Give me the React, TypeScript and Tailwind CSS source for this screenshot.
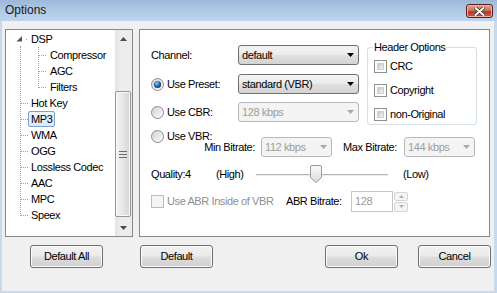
import React from "react";

type TreeItem = { label: string; depth: 0 | 1; first?: boolean; last?: boolean; selected?: boolean };

const treeItems: TreeItem[] = [
  { label: "DSP", depth: 0, first: true },
  { label: "Compressor", depth: 1 },
  { label: "AGC", depth: 1 },
  { label: "Filters", depth: 1, last: true },
  { label: "Hot Key", depth: 0 },
  { label: "MP3", depth: 0, selected: true },
  { label: "WMA", depth: 0 },
  { label: "OGG", depth: 0 },
  { label: "Lossless Codec", depth: 0 },
  { label: "AAC", depth: 0 },
  { label: "MPC", depth: 0 },
  { label: "Speex", depth: 0, last: true },
];

const dot = { stroke: "#a0a0a0", strokeDasharray: "1 1", shapeRendering: "crispEdges" as const };

// dotted tree connectors for one row
function Connector({ item }: { item: TreeItem }) {
  if (item.depth === 1) {
    return (
      <svg width="41" height="16" className="shrink-0">
        <line x1="14.5" y1="0" x2="14.5" y2="16" {...dot} />
        <line x1="32.5" y1="0" x2="32.5" y2={item.last ? 9 : 16} {...dot} />
        <line x1="33" y1="8.5" x2="41" y2="8.5" {...dot} />
      </svg>
    );
  }
  if (item.first) {
    return (
      <svg width="22" height="16" className="shrink-0">
        <polygon points="16,5 16,10.5 10.5,10.5" fill="#555" />
        <rect x="20" y="8" width="1" height="1" fill="#a0a0a0" />
        <line x1="14.5" y1="15" x2="14.5" y2="16" {...dot} />
      </svg>
    );
  }
  return (
    <svg width="22" height="16" className="shrink-0">
      <line x1="14.5" y1="0" x2="14.5" y2={item.last ? 9 : 16} {...dot} />
      <line x1="15" y1="8.5" x2="22" y2="8.5" {...dot} />
    </svg>
  );
}

function Radio({ checked }: { checked?: boolean }) {
  return (
    <svg width="13" height="13" viewBox="0 0 13 13" className="shrink-0">
      <defs>
        <linearGradient id="radioFill" x1="0" y1="0" x2="1" y2="1">
          <stop offset="0" stopColor="#d2d2d2" />
          <stop offset="1" stopColor="#fbfbfb" />
        </linearGradient>
        <radialGradient id="radioDot" cx="0.4" cy="0.35" r="0.75">
          <stop offset="0" stopColor="#a8cdf5" />
          <stop offset="0.45" stopColor="#2d6cc0" />
          <stop offset="1" stopColor="#0b2a55" />
        </radialGradient>
      </defs>
      <circle cx="6.5" cy="6.5" r="6" fill="url(#radioFill)" stroke="#8d8d8d" />
      {checked && <circle cx="6.5" cy="6.5" r="3.6" fill="url(#radioDot)" />}
    </svg>
  );
}

function Check({ disabled }: { disabled?: boolean }) {
  return (
    <div
      className={
        disabled
          ? "w-[13px] h-[13px] shrink-0 border border-[#bcbcbc] bg-[#f4f4f4]"
          : "w-[13px] h-[13px] shrink-0 border border-[#8e8f8f] bg-white p-[2px]"
      }
    >
      {!disabled && <div className="w-full h-full bg-[linear-gradient(135deg,#c9c9c9,#f4f4f4)] border border-[#cfcfcf]" />}
    </div>
  );
}

function Combo({ text, w, disabled }: { text: string; w: string; disabled?: boolean }) {
  return (
    <div
      className={
        (disabled
          ? "border-[#b6babe] bg-[#f4f4f4] text-[#9d9d9d] "
          : "border-[#707070] bg-[linear-gradient(#f3f3f3,#ececec_48%,#e0e0e0_52%,#d3d3d3)] text-black ") +
        w +
        " h-[20px] shrink-0 flex items-center justify-between border rounded-[3px] pl-[3px] pr-[4px]"
      }
    >
      <span>{text}</span>
      <svg width="7" height="4">
        <polygon points="0,0 7,0 3.5,4" fill={disabled ? "#a8a8a8" : "#000"} />
      </svg>
    </div>
  );
}

function Button({ label, className = "" }: { label: string; className?: string }) {
  return (
    <button
      className={
        "w-[73px] h-[23px] shrink-0 border border-[#707070] rounded-[3px] bg-[linear-gradient(#f2f2f2,#ebebeb_45%,#dddddd_55%,#cfcfcf)] shadow-[inset_0_0_0_1px_#fbfbfb] text-black " +
        className
      }
    >
      {label}
    </button>
  );
}

function ScrollArrow({ up }: { up?: boolean }) {
  return (
    <div className="h-[17px] flex items-center justify-center shrink-0">
      <svg width="7" height="4">
        <polygon points={up ? "3.5,0 7,4 0,4" : "0,0 7,0 3.5,4"} fill="#4a4a4a" />
      </svg>
    </div>
  );
}

function Tree() {
  return (
    <div className="w-[128px] h-[208px] shrink-0 border border-[#828790] bg-white flex">
      <div className="flex-1 pt-[1px] flex flex-col">
        {treeItems.map((it) => (
          <div key={it.label} className="h-[16px] flex items-center">
            <Connector item={it} />
            <span
              className={
                it.selected
                  ? "h-[16px] leading-[14px] px-[2px] border border-[#7da2ce] rounded-[2px] bg-[linear-gradient(#eef5fd,#d9e9fb)]"
                  : "h-[16px] leading-[14px] px-[2px] border border-transparent"
              }
            >
              {it.label}
            </span>
          </div>
        ))}
      </div>
      <div className="w-[17px] flex flex-col bg-[linear-gradient(90deg,#e3e3e3,#eeeeee_40%,#ebebeb)]">
        <ScrollArrow up />
        <div className="flex-1 pt-[44px]">
          <div className="w-[16px] h-[126px] border border-[#959595] rounded-[2px] bg-[linear-gradient(90deg,#f4f4f4,#e6e6e6_50%,#d4d4d4)] shadow-[inset_0_0_0_1px_#fafafa] flex items-center justify-center">
            <svg width="8" height="7">
              <line x1="0" y1="0.5" x2="8" y2="0.5" stroke="#6b6b6b" />
              <line x1="0" y1="3.5" x2="8" y2="3.5" stroke="#6b6b6b" />
              <line x1="0" y1="6.5" x2="8" y2="6.5" stroke="#6b6b6b" />
            </svg>
          </div>
        </div>
        <ScrollArrow />
      </div>
    </div>
  );
}

function Slider() {
  return (
    <svg width="132" height="18" className="shrink-0">
      <defs>
        <linearGradient id="thumbFill" x1="0" y1="0" x2="0" y2="1">
          <stop offset="0" stopColor="#fbfbfb" />
          <stop offset="1" stopColor="#dadada" />
        </linearGradient>
      </defs>
      <line x1="0" y1="9.5" x2="132" y2="9.5" stroke="#b4b4b4" shapeRendering="crispEdges" />
      <line x1="0" y1="10.5" x2="132" y2="10.5" stroke="#ececec" shapeRendering="crispEdges" />
      <path d="M54.5,2 Q54.5,0.5 56,0.5 H64 Q65.5,0.5 65.5,2 V12.5 L60,17.5 L54.5,12.5 Z" fill="url(#thumbFill)" stroke="#9a9a9a" />
    </svg>
  );
}

function Spinner() {
  return (
    <div className="w-[14px] h-[20px] ml-[1px] flex flex-col gap-[1px] shrink-0">
      {[true, false].map((up) => (
        <div key={String(up)} className="flex-1 border border-[#d6d6d6] rounded-[2px] bg-[#f4f4f4] flex items-center justify-center">
          <svg width="5" height="3">
            <polygon points={up ? "2.5,0 5,3 0,3" : "0,0 5,0 2.5,3"} fill="#b0b0b0" />
          </svg>
        </div>
      ))}
    </div>
  );
}

function Mp3Panel() {
  return (
    <div className="flex-1 border border-[#828790] bg-white flex flex-col">
      <div className="mt-[11px] h-[84px] flex">
        <div className="pl-[11px] pt-[4px] flex flex-col">
          <div className="h-[20px] flex items-center">
            <span className="w-[87px]">Channel:</span>
            <Combo text="default" w="w-[121px]" />
          </div>
          <div className="mt-[9px] h-[20px] flex items-center">
            <div className="w-[87px] flex items-center gap-[3px]">
              <Radio checked />
              <span>Use Preset:</span>
            </div>
            <Combo text="standard (VBR)" w="w-[121px]" />
          </div>
          <div className="mt-[8px] h-[20px] flex items-center">
            <div className="w-[87px] flex items-center gap-[3px]">
              <Radio />
              <span>Use CBR:</span>
            </div>
            <Combo text="128 kbps" w="w-[121px]" disabled />
          </div>
        </div>
        <fieldset className="ml-[8px] w-[110px] h-[84px] border border-[#d5dfe5] rounded-[3px] px-[6px]">
          <legend className="leading-[13px] px-[1px] ml-[-1px]">Header Options</legend>
          <div className="pt-[6px] flex flex-col gap-[11px]">
            {["CRC", "Copyright", "non-Original"].map((l) => (
              <div key={l} className="h-[13px] flex items-center gap-[3px]">
                <Check />
                <span>{l}</span>
              </div>
            ))}
          </div>
        </fieldset>
      </div>

      <div className="mt-[5px] h-[13px] pl-[11px] flex items-center gap-[3px]">
        <Radio />
        <span>Use VBR:</span>
      </div>

      <div className="mt-[-6px] h-[20px] pl-[11px] flex items-center">
        <span className="w-[104px] text-right">Min Bitrate:</span>
        <div className="ml-[6px]">
          <Combo text="112 kbps" w="w-[71px]" disabled />
        </div>
        <span className="w-[65px] text-right">Max Bitrate:</span>
        <div className="ml-[7px]">
          <Combo text="144 kbps" w="w-[71px]" disabled />
        </div>
      </div>

      <div className="mt-[8px] h-[18px] pl-[11px] flex items-center">
        <span className="w-[65px]">Quality:4</span>
        <span className="w-[40px]">(High)</span>
        <Slider />
        <span className="ml-[15px]">(Low)</span>
      </div>

      <div className="mt-[8px] h-[21px] pl-[11px] flex items-center">
        <div className="w-[135px] flex items-center gap-[3px]">
          <Check disabled />
          <span className="text-[#8f8f8f]">Use ABR Inside of VBR</span>
        </div>
        <span className="w-[65px]">ABR Bitrate:</span>
        <div className="w-[42px] h-[21px] border border-[#c2c6ca] bg-white text-[#9a9a9a] pl-[3px] flex items-center">128</div>
        <Spinner />
      </div>
    </div>
  );
}

export default function App() {
  return (
    <div className="w-[497px] h-[293px] flex flex-col bg-[#f0f0f0] overflow-hidden font-['Liberation_Sans',Arial,sans-serif] text-[11px] tracking-[-0.4px] text-black">
      {/* title bar */}
      <div className="h-[21px] shrink-0 flex items-start justify-between pl-[5px] pr-[4px] bg-[linear-gradient(#9db8d9,#b3cce8_60%,#bdd4ed)]">
        <span className="text-[12px] tracking-normal leading-[21px] text-[#1a1a1a]">Options</span>
        <div className="mt-[4px] w-[27px] h-[14px] border border-[#5e1d1d] rounded-[3px] bg-[linear-gradient(#e6a394,#d0705f_45%,#b8392a_55%,#c85a44)] shadow-[inset_0_0_0_1px_#eeb3a5] flex items-center justify-center">
          <svg width="11" height="9" viewBox="0 0 11 9">
            <path d="M1.5,1 L9.5,8 M9.5,1 L1.5,8" stroke="#3b2a2a" strokeWidth="3.4" strokeLinecap="round" />
            <path d="M1.5,1 L9.5,8 M9.5,1 L1.5,8" stroke="#ffffff" strokeWidth="2" strokeLinecap="round" />
          </svg>
        </div>
      </div>

      {/* body */}
      <div className="flex-1 flex flex-col border-l-[2px] border-r-[3px] border-b-[2px] border-[#c5d9ef] pl-[3px] pr-[4px] pt-[8px]">
        <div className="h-[208px] flex gap-[6px]">
          <Tree />
          <Mp3Panel />
        </div>
        <div className="mt-[8px] flex">
          <Button label="Default All" className="ml-[25px]" />
          <Button label="Default" className="ml-[37px]" />
          <Button label="Ok" className="ml-[112px]" />
          <Button label="Cancel" className="ml-[20px]" />
        </div>
      </div>
    </div>
  );
}
